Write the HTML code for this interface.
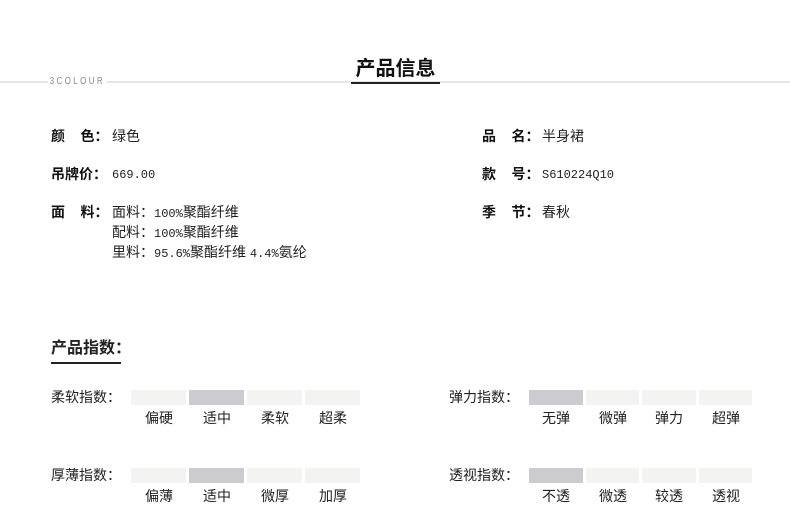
<!DOCTYPE html>
<html><head><meta charset="utf-8"><style>
*{margin:0;padding:0;box-sizing:border-box}
body{width:790px;height:511px;background:#fff;position:relative;overflow:hidden;font-family:"Liberation Sans","Noto Sans CJK SC",sans-serif;color:#222}
.a{position:absolute;white-space:nowrap}
.hl{position:absolute;left:0;top:81px;width:790px;height:2px;background:#e6e6e6}
.brand{position:absolute;left:48px;top:76px;font-size:10px;letter-spacing:3px;color:#888;background:#fff;padding:0 2px;line-height:11px;transform:scaleX(.8);transform-origin:left}
.title{left:351px;top:56px;width:89px;text-align:center;font-size:20px;font-weight:bold;line-height:26px;color:#111}
.tul{position:absolute;left:351px;top:82px;width:89px;height:2px;background:#222}
.lb{font-size:14px;font-weight:bold;line-height:16px;color:#111}
.v{font-size:14px;line-height:16px;color:#222}
.n{font-family:"Liberation Mono",monospace;font-size:12px}
.sec{left:51px;top:339px;font-size:16px;font-weight:bold;line-height:20px}
.sul{position:absolute;left:51px;top:362px;width:70px;height:2px;background:#222}
.bx{position:absolute;height:15px;background:#f3f3f2}
.on{background:#cbcbd0}
.il{font-size:14px;line-height:16px}
.t{position:absolute;font-size:14px;line-height:16px;text-align:center;width:56px}
</style></head><body>
<div class="hl"></div>
<div class="brand">3COLOUR</div>
<div class="a title">产品信息</div>
<div class="tul"></div>

<div class="a lb" style="left:51px;top:128px">颜&nbsp;&nbsp;&nbsp;&nbsp;色：</div>
<div class="a v" style="left:112px;top:128px">绿色</div>
<div class="a lb" style="left:51px;top:166px">吊牌价：</div>
<div class="a v n" style="left:112px;top:167px">669.00</div>
<div class="a lb" style="left:51px;top:204px">面&nbsp;&nbsp;&nbsp;&nbsp;料：</div>
<div class="a v" style="left:112px;top:204px">面料：<span class="n">100%</span>聚酯纤维</div>
<div class="a v" style="left:112px;top:224px">配料：<span class="n">100%</span>聚酯纤维</div>
<div class="a v" style="left:112px;top:244px">里料：<span class="n">95.6%</span>聚酯纤维 <span class="n">4.4%</span>氨纶</div>

<div class="a lb" style="left:482px;top:128px">品&nbsp;&nbsp;&nbsp;&nbsp;名：</div>
<div class="a v" style="left:542px;top:128px">半身裙</div>
<div class="a lb" style="left:482px;top:166px">款&nbsp;&nbsp;&nbsp;&nbsp;号：</div>
<div class="a v n" style="left:542px;top:167px">S610224Q10</div>
<div class="a lb" style="left:482px;top:204px">季&nbsp;&nbsp;&nbsp;&nbsp;节：</div>
<div class="a v" style="left:542px;top:204px">春秋</div>

<div class="a sec">产品指数：</div>
<div class="sul"></div>

<div class="a il" style="left:51px;top:389px">柔软指数：</div>
<div class="bx" style="left:131px;top:390px;width:55px"></div>
<div class="bx on" style="left:189px;top:390px;width:55px"></div>
<div class="bx" style="left:247px;top:390px;width:55px"></div>
<div class="bx" style="left:305px;top:390px;width:55px"></div>
<div class="t" style="left:131px;top:410px">偏硬</div>
<div class="t" style="left:189px;top:410px">适中</div>
<div class="t" style="left:247px;top:410px">柔软</div>
<div class="t" style="left:305px;top:410px">超柔</div>

<div class="a il" style="left:51px;top:467px">厚薄指数：</div>
<div class="bx" style="left:131px;top:468px;width:55px"></div>
<div class="bx on" style="left:189px;top:468px;width:55px"></div>
<div class="bx" style="left:247px;top:468px;width:55px"></div>
<div class="bx" style="left:305px;top:468px;width:55px"></div>
<div class="t" style="left:131px;top:488px">偏薄</div>
<div class="t" style="left:189px;top:488px">适中</div>
<div class="t" style="left:247px;top:488px">微厚</div>
<div class="t" style="left:305px;top:488px">加厚</div>

<div class="a il" style="left:449px;top:389px">弹力指数：</div>
<div class="bx on" style="left:529px;top:390px;width:54px"></div>
<div class="bx" style="left:586px;top:390px;width:53px"></div>
<div class="bx" style="left:642px;top:390px;width:54px"></div>
<div class="bx" style="left:699px;top:390px;width:53px"></div>
<div class="t" style="left:528px;top:410px">无弹</div>
<div class="t" style="left:585px;top:410px">微弹</div>
<div class="t" style="left:641px;top:410px">弹力</div>
<div class="t" style="left:698px;top:410px">超弹</div>

<div class="a il" style="left:449px;top:467px">透视指数：</div>
<div class="bx on" style="left:529px;top:468px;width:54px"></div>
<div class="bx" style="left:586px;top:468px;width:53px"></div>
<div class="bx" style="left:642px;top:468px;width:54px"></div>
<div class="bx" style="left:699px;top:468px;width:53px"></div>
<div class="t" style="left:528px;top:488px">不透</div>
<div class="t" style="left:585px;top:488px">微透</div>
<div class="t" style="left:641px;top:488px">较透</div>
<div class="t" style="left:698px;top:488px">透视</div>
</body></html>
